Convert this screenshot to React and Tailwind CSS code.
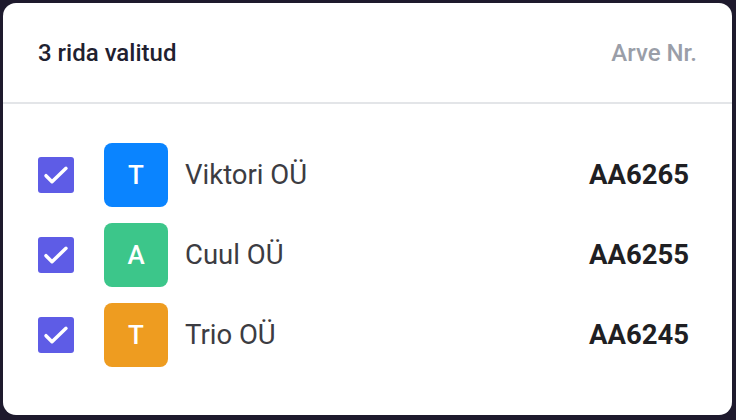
import React from 'react';

// Selected invoice rows card
const rows = [
  { letter: 'T', name: 'Viktori OÜ', invoice: 'AA6265', color: 'bg-[#0a84ff]' },
  { letter: 'A', name: 'Cuul OÜ', invoice: 'AA6255', color: 'bg-[#3cc68a]' },
  { letter: 'T', name: 'Trio OÜ', invoice: 'AA6245', color: 'bg-[#ee9c20]' },
];

const CheckBox = () => (
  <div className="w-[36px] h-[36px] rounded-[3px] bg-[#5e5ce6] flex items-center justify-center shrink-0">
    <svg width="32" height="32" viewBox="0 0 24 24" fill="none">
      <path d="M4.5 12.5l4.5 4.5L19.5 7" stroke="white" strokeWidth="2.6" strokeLinecap="round" strokeLinejoin="round" />
    </svg>
  </div>
);

const Row = ({ row }) => (
  <div className="flex items-center h-[64px]">
    <CheckBox />
    <div className={`w-[64px] h-[64px] ml-[30px] rounded-[8px] ${row.color} flex items-center justify-center text-white text-[26px] font-medium shrink-0`}>
      {row.letter}
    </div>
    <span className="ml-[17px] text-[27.5px] text-[#3c3c42]">{row.name}</span>
    <span className="ml-auto text-[27.5px] font-bold text-[#1f1f23]">{row.invoice}</span>
  </div>
);

const App = () => {
  return (
    <div
      className="w-[736px] h-[420px] bg-[#1e1a2d] pt-[3px] pl-[3px] pr-[4px] pb-[5px]"
      style={{ fontFamily: 'Roboto, "Liberation Sans", sans-serif' }}
    >
      <div className="bg-white rounded-[13px] h-full flex flex-col">
        {/* Header */}
        <div className="h-[101px] flex items-center justify-between pl-[35px] pr-[35px] border-b-2 border-[#e3e5e8]">
          <span className="text-[24px] font-medium text-[#1f2130]">3 rida valitud</span>
          <span className="text-[24px] font-medium text-[#9a9ea8]">Arve Nr.</span>
        </div>

        {/* Rows */}
        <div className="flex flex-col gap-[16px] pt-[39px] pl-[35px] pr-[43px]">
          {rows.map((row) => (
            <Row key={row.invoice} row={row} />
          ))}
        </div>
      </div>
    </div>
  );
};

export default App;
